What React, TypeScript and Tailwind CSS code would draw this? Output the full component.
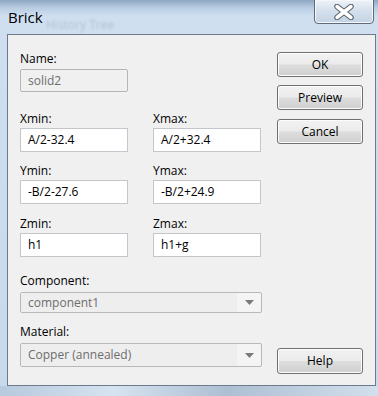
const font = "font-['Segoe_UI','Open_Sans',sans-serif]"

const Field = ({ label, value }: { label: string; value: string }) => (
  <div className="flex flex-col w-[108px]">
    <div className="h-[16px] leading-[16px]">{label}</div>
    <div className="mt-px h-[24px] border border-[#c3c6cb] bg-white pl-[7px] leading-[22px]">{value}</div>
  </div>
)

const Button = ({ children, className = '' }: { children: string; className?: string }) => (
  <div
    className={`h-[25px] w-[86px] rounded-[3px] border border-[#707070] bg-[linear-gradient(#f2f2f2_0%,#ebebeb_48%,#dddddd_52%,#cfcfcf_100%)] text-center leading-[23px] shadow-[inset_0_0_0_1px_#fcfcfc] ${className}`}
  >
    {children}
  </div>
)

const Select = ({ value, h }: { value: string; h: string }) => (
  <div className={`flex ${h} w-[242px] items-center rounded-[2px] border border-[#b8b8b8] bg-[#f4f4f4] text-[#6d6d6d]`}>
    <div className="flex h-full flex-1 items-center bg-[#eeeeee] pl-[7px]">{value}</div>
    <div className="flex h-full w-[24px] items-center justify-center">
      <svg width="9" height="5" viewBox="0 0 9 5"><path d="M0 0h9L4.5 5z" fill="#7a7a7a" /></svg>
    </div>
  </div>
)

export default function App() {
  return (
    <div className={`relative flex h-[396px] w-[378px] flex-col overflow-hidden bg-[linear-gradient(180deg,#8fa7c2_0px,#b9cde3_8px,#cfdff0_16px,#c7d9ec_100%)] text-[12px] text-black ${font}`}>
      {/* title bar */}
      <div className="relative flex h-[34px] shrink-0 items-start">
        <div className="absolute left-[46px] top-[16px] text-[12px] text-[#5b6876] opacity-25 blur-[1px]">History Tree</div>
        <div className="relative pl-[8px] pt-[7px] text-[15px] leading-[20px]">Brick</div>
        <div className="ml-auto mr-[4px] mt-[-1px] flex h-[25px] w-[60px] items-center justify-center rounded-b-[4px] border border-[#5d6b7d] bg-[linear-gradient(#eef3f8,#d3dfec_50%,#c3d3e5)] shadow-[inset_0_0_0_1px_#f4f8fc]">
          <svg width="24" height="16" viewBox="0 0 24 16">
            <path d="M5 2.5L19 13.5M19 2.5L5 13.5" stroke="#5a6068" strokeWidth="5.5" strokeLinecap="round" />
            <path d="M5 2.5L19 13.5M19 2.5L5 13.5" stroke="#ffffff" strokeWidth="3.5" strokeLinecap="round" />
          </svg>
        </div>
      </div>

      {/* client area */}
      <div className="ml-[7px] mr-[2px] flex h-[352px] border border-[#6c7a8b] bg-[#f0f0f0]">
        <div className="flex w-[254px] flex-col pl-[12px] pt-[16px]">
          <div className="h-[16px] leading-[16px]">Name:</div>
          <div className="mt-[2px] h-[23px] w-[108px] rounded-[2px] border border-[#b5b5b5] bg-[#f0f0f0] pl-[7px] leading-[21px] text-[#6d6d6d]">solid2</div>

          <div className="mt-[19px] flex gap-[25px]">
            <Field label="Xmin:" value="A/2-32.4" />
            <Field label="Xmax:" value="A/2+32.4" />
          </div>
          <div className="mt-[11px] flex gap-[25px]">
            <Field label="Ymin:" value="-B/2-27.6" />
            <Field label="Ymax:" value="-B/2+24.9" />
          </div>
          <div className="mt-[12px] flex gap-[25px]">
            <Field label="Zmin:" value="h1" />
            <Field label="Zmax:" value="h1+g" />
          </div>

          <div className="mt-[16px] h-[16px] leading-[16px]">Component:</div>
          <div className="mt-[3px]">
            <Select value="component1" h="h-[21px]" />
          </div>
          <div className="mt-[11px] h-[16px] leading-[16px]">Material:</div>
          <div className="mt-[3px]">
            <Select value="Copper (annealed)" h="h-[24px]" />
          </div>
        </div>

        <div className="ml-[15px] flex flex-col pb-[11px] pt-[17px]">
          <Button>OK</Button>
          <Button className="mt-[8px]">Preview</Button>
          <Button className="mt-[9px]">Cancel</Button>
          <Button className="mt-auto h-[26px]">Help</Button>
        </div>
      </div>

      <div className="h-[10px] bg-[linear-gradient(90deg,#b7c9dd,#d6e3f0_30%,#aebfd3_60%,#d2dfec)]" />
    </div>
  )
}
